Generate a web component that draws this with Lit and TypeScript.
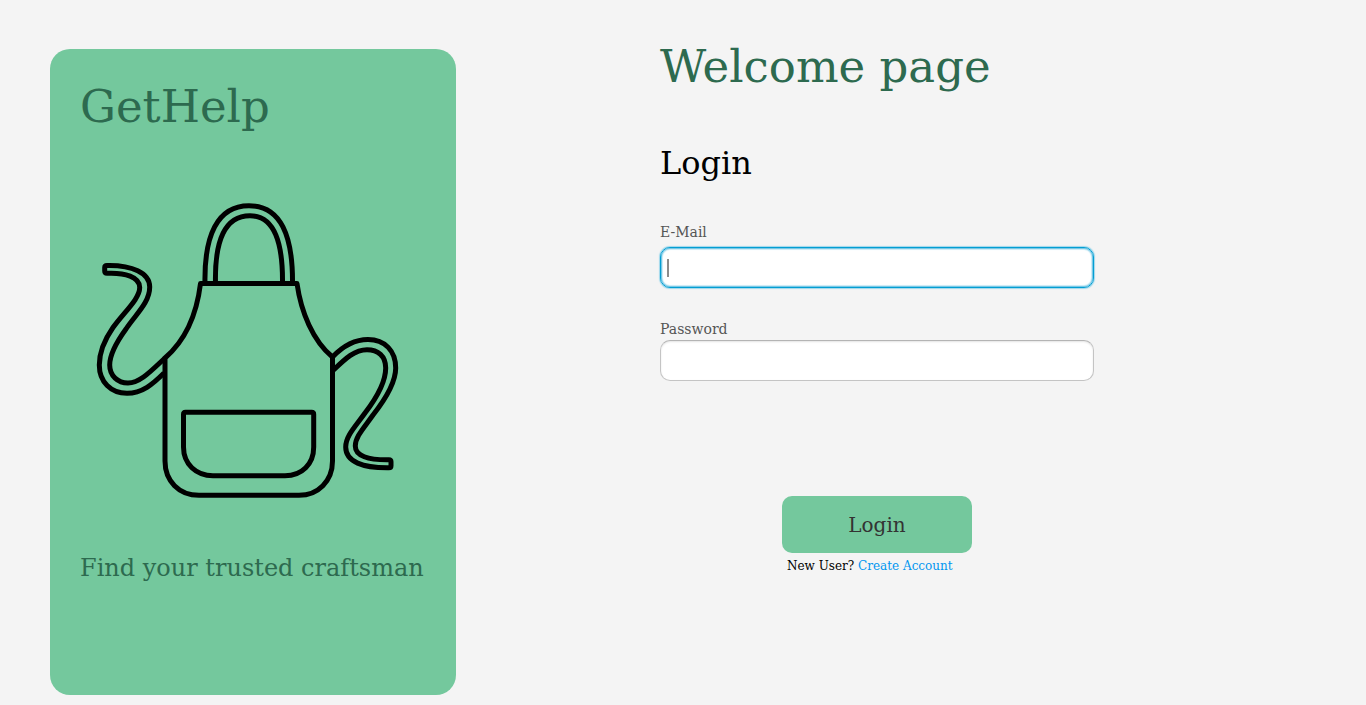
import { LitElement, html, css } from "lit";
import { customElement, query, state } from "lit/decorators.js";
import { classMap } from "lit/directives/class-map.js";

@customElement("apron-logo")
class ApronLogo extends LitElement {
  static styles = css`
    :host {
      display: block;
    }
    .drawing {
      display: block;
      width: 100%;
      fill: none;
      stroke: #000;
      stroke-width: 5;
      stroke-linejoin: round;
      stroke-linecap: butt;
    }
  `;

  render() {
    return html`
      <svg class="drawing" viewBox="80 195 346 310" role="img" aria-label="Apron">
        <!-- neck strap -->
        <path d="M205 284C204 236 217 205.7 249 205.7C281 205.7 293 236 292.5 284" />
        <path d="M215.5 284C214.5 240 225 215.7 250 215.7C275 215.7 283 244 282.5 284" />
        <!-- bib and skirt -->
        <path
          d="M200.5 283.5H297C301 312 313 341 332.5 357V461C332.5 481 318 495.3 299 495.3H199C179 495.3 165 481 165 461V358C187 339 197 312 200.5 283.5Z"
        />
        <!-- pocket -->
        <path
          d="M185.5 412.3H311.7Q313.7 412.3 313.7 414.3V447C313.7 464 302 475.7 285 475.7H213C196 475.7 183.5 464 183.5 447V414.3Q183.5 412.3 185.5 412.3Z"
        />
        <!-- left tie -->
        <path
          d="M165 358C151 371 140 383 128 383C118 383 109.7 376 109.7 365C109.7 353 118 340 126 329C135 315 149.7 303 149.7 287C149.7 273 132 265 107 265.5Q104.7 265.5 104.7 267.5V271Q104.7 273.3 107 273.3C125 272.5 139.7 277 139.7 287.5C139.7 299 124 312 113 327.5C105 339 99.3 351 99.3 365C99.3 382 111 393.3 127 393.3C142 393.3 153 384 164 373"
        />
        <!-- right tie -->
        <path
          d="M332.5 357C343 346 355 339.5 368 339.5C385 339.5 395.7 351 395.7 368C395.7 384 384 401 373 415C363 429 355.3 437 355.3 446C355.3 456 368 460 389 459.7Q391 459.7 391 461.7V465.7Q391 467.7 389 467.7C363 468 345.7 462 345.7 447C345.7 436 355 427 365 413C375 400 385.7 383 385.7 368C385.7 356 378 349.7 367 349.7C355 349.7 346 358 333 370.5"
        />
      </svg>
    `;
  }
}

@customElement("app-root")
class AppRoot extends LitElement {
  @state() private active = "email";
  @state() private email = "";
  @query("#email") private emailInput!: HTMLInputElement;

  static styles = css`
    :host {
      display: block;
      font-family: "DejaVu Serif", serif;
      color: #000;
      background: #f4f4f4;
    }
    .page {
      box-sizing: border-box;
      min-height: 100vh;
      display: grid;
      grid-template-columns: 406px minmax(0, 434px);
      column-gap: clamp(40px, 15vw, 204px);
      padding: 49px 50px 10px;
    }
    .card {
      box-sizing: border-box;
      padding: 26px 30px;
      border-radius: 20px;
      background: #74c89d;
      color: #2d6a4f;
    }
    .brand,
    .title,
    .subtitle {
      margin: 0;
      font-weight: 400;
    }
    .brand,
    .title {
      font-size: 45px;
      line-height: 64px;
    }
    .logo {
      margin-top: 56px;
    }
    .slogan {
      margin: 48px 0 0;
      font-size: 24px;
      line-height: 30px;
      white-space: nowrap;
    }
    .content {
      margin-top: -14px;
    }
    .title {
      color: #2d6a4f;
    }
    .subtitle {
      margin-top: 42px;
      font-size: 32px;
      line-height: 44px;
    }
    .field {
      display: flex;
      flex-direction: column;
      gap: 6px;
      margin-top: 38px;
    }
    .field + .field {
      margin-top: 32px;
      gap: 2px;
    }
    .label {
      font-size: 14px;
      line-height: 18px;
      color: #555;
    }
    .input {
      box-sizing: border-box;
      width: 100%;
      height: 41px;
      padding: 0 7px;
      border: 1px solid #c4c4c4;
      border-top-color: #b4b4b4;
      border-radius: 10px;
      outline: none;
      background: #fff;
      box-shadow: inset 0 1px 2px #e4e4e4;
      font: 16px "DejaVu Serif", serif;
    }
    .input.active {
      border-color: #039ed3;
      box-shadow:
        0 0 1px 1px #9fd8ec,
        inset 0 0 1px 1px #6cc4e4,
        inset 0 0 1px 2px #d9f0f8;
    }
    .input.empty {
      caret-color: transparent;
      background: #fff linear-gradient(#8c8c8c, #8c8c8c) 6px 50% / 2px 18px no-repeat;
    }
    .actions {
      display: flex;
      flex-direction: column;
      align-items: center;
      margin-top: 115px;
    }
    .submit {
      width: 190px;
      height: 57px;
      border: 0;
      border-radius: 10px;
      background: #74c89d;
      color: #333;
      font: 20px "DejaVu Serif", serif;
      cursor: pointer;
    }
    .signup {
      width: 180px;
      margin: 4px 0 0;
      font-size: 12px;
      line-height: 18px;
      white-space: nowrap;
    }
    .link {
      color: #0096f0;
      text-decoration: none;
    }
    @media (max-width: 940px) {
      .page {
        grid-template-columns: minmax(0, 1fr);
        row-gap: 60px;
        padding: 24px;
      }
    }
  `;

  firstUpdated() {
    this.emailInput.focus();
  }

  render() {
    return html`
      <main class="page">
        <section class="card">
          <h2 class="brand">GetHelp</h2>
          <apron-logo class="logo"></apron-logo>
          <p class="slogan">Find your trusted craftsman</p>
        </section>
        <section class="content">
          <h1 class="title">Welcome page</h1>
          <h2 class="subtitle">Login</h2>
          <form @submit=${(e: Event) => e.preventDefault()}>
            <div class="field">
              <label class="label" for="email">E-Mail</label>
              <input
                id="email"
                type="email"
                class=${classMap({
                  input: true,
                  active: this.active === "email",
                  empty: this.active === "email" && !this.email,
                })}
                @focus=${() => (this.active = "email")}
                @input=${(e: Event) => (this.email = (e.target as HTMLInputElement).value)}
              />
            </div>
            <div class="field">
              <label class="label" for="password">Password</label>
              <input
                id="password"
                type="password"
                class=${classMap({ input: true, active: this.active === "password" })}
                @focus=${() => (this.active = "password")}
              />
            </div>
            <div class="actions">
              <button class="submit" type="submit">Login</button>
              <p class="signup">New User? <a class="link" href="#create">Create Account</a></p>
            </div>
          </form>
        </section>
      </main>
    `;
  }
}
